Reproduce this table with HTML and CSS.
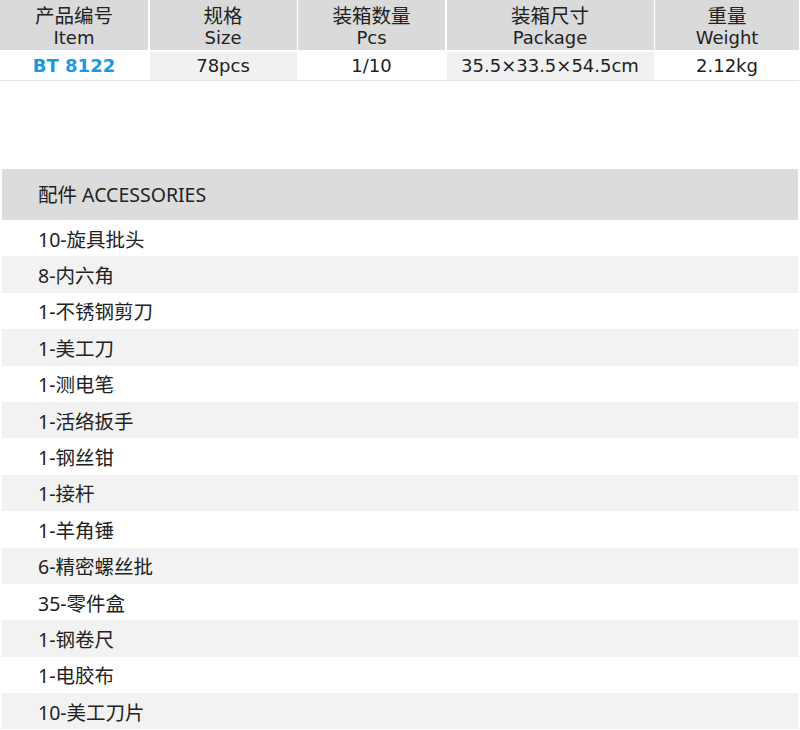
FILE: index.html
```html
<!DOCTYPE html>
<html lang="zh">
<head>
<meta charset="utf-8">
<link rel="stylesheet" href="styles.css">
</head>
<body>
<div class="spec">
  <div class="cell head"><span class="cn">产品编号</span><span class="en">Item</span></div>
  <div class="cell head"><span class="cn">规格</span><span class="en">Size</span></div>
  <div class="cell head"><span class="cn">装箱数量</span><span class="en">Pcs</span></div>
  <div class="cell head"><span class="cn">装箱尺寸</span><span class="en">Package</span></div>
  <div class="cell head"><span class="cn">重量</span><span class="en">Weight</span></div>
  <div class="cell data item">BT 8122</div>
  <div class="cell data alt">78pcs</div>
  <div class="cell data">1/10</div>
  <div class="cell data alt">35.5×33.5×54.5cm</div>
  <div class="cell data">2.12kg</div>
</div>
<div class="acc">
  <div class="acc-head">配件 ACCESSORIES</div>
  <div class="row">10-旋具批头</div>
  <div class="row">8-内六角</div>
  <div class="row">1-不锈钢剪刀</div>
  <div class="row">1-美工刀</div>
  <div class="row">1-测电笔</div>
  <div class="row">1-活络扳手</div>
  <div class="row">1-钢丝钳</div>
  <div class="row">1-接杆</div>
  <div class="row">1-羊角锤</div>
  <div class="row">6-精密螺丝批</div>
  <div class="row">35-零件盒</div>
  <div class="row">1-钢卷尺</div>
  <div class="row">1-电胶布</div>
  <div class="row">10-美工刀片</div>
</div>
</body>
</html>
```
FILE: styles.css
```css
* { box-sizing: border-box; }
body {
  margin: 0;
  background: #fff;
  color: #222;
  font-family: "Noto Sans", "Noto Sans CJK SC", sans-serif;
}
.spec {
  display: grid;
  grid-template-columns: 148px 147px 147px 207px 1fr;
  grid-template-rows: 50px 28px;
  column-gap: 1.5px;
  row-gap: 2px;
  width: 799px;
  border-bottom: 1px solid #e4e4e4;
  font-family: "DejaVu Sans", "Noto Sans CJK SC", sans-serif;
}
.cell {
  display: flex;
  flex-direction: column;
  align-items: center;
  justify-content: center;
  font-size: 18px;
}
.head {
  background: #dadada;
  line-height: 23px;
  padding-top: 1px;
}
.head .cn { font-size: 19.5px; font-family: "Noto Sans CJK SC", sans-serif; }
.head .en { font-size: 18px; }
.data { line-height: 28px; }
.alt { background: #f1f1f1; }
.item {
  color: #1b98e0;
  font-weight: bold;
}
.acc {
  margin: 88px 2px 0;
}
.acc-head {
  height: 51px;
  background: #dcdcdc;
  display: flex;
  align-items: center;
  padding-left: 36px;
  font-size: 19.5px;
  padding-bottom: 2px;
}
.row {
  height: 36.4px;
  display: flex;
  align-items: center;
  padding-left: 36px;
  font-size: 19.5px;
}
.row:nth-child(odd) { background: #f2f2f2; }
```
